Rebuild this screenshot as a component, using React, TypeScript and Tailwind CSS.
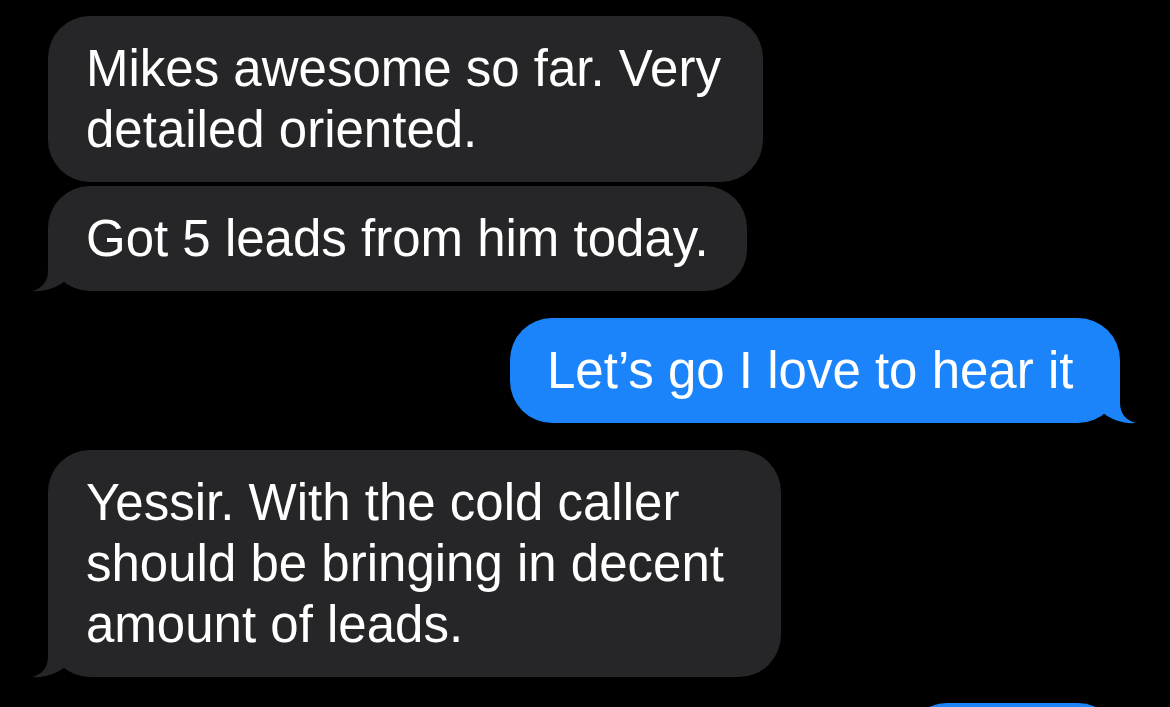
// Messages thread (dark mode)

type Msg = { text: string; me: boolean; width: string; tail: boolean };

const messages: Msg[] = [
  { text: "Mikes awesome so far. Very detailed oriented.", me: false, width: "w-[715px]", tail: false },
  { text: "Got 5 leads from him today.", me: false, width: "w-[699px]", tail: true },
  { text: "Let\u2019s go I love to hear it", me: true, width: "w-[610px]", tail: true },
  {
    text: "Yessir. With the cold caller should be bringing in decent amount of leads.",
    me: false,
    width: "w-[733px]",
    tail: true,
  },
];

// bubble tail drawn at the bottom corner
const Tail = ({ me }: { me: boolean }) => (
  <svg
    width="40"
    height="42"
    viewBox="-17 -42 40 42"
    className={
      me
        ? "absolute bottom-0 right-[-17px] -scale-x-100 overflow-visible"
        : "absolute bottom-0 left-[-17px] overflow-visible"
    }
  >
    <path
      d="M 0 -42 L 0 -20 C 0 -9 -7 -2 -16 0 C -4 1 8 -3 17 -10 L 22 -22 L 22 -42 Z"
      fill={me ? "#1b84fa" : "#262628"}
    />
  </svg>
);

const Bubble = ({ msg }: { msg: Msg }) => (
  <div className={msg.me ? "flex justify-end pr-[50px]" : "flex justify-start pl-[48px]"}>
    <div
      className={`relative ${msg.width} rounded-[42px] py-[22px] ${
        msg.me ? "bg-[#1b84fa] pl-[37px] pr-[20px]" : "bg-[#262628] pl-[38px] pr-[20px]"
      }`}
    >
      <p className="text-[51px] leading-[61px] text-white">{msg.text}</p>
      {msg.tail && <Tail me={msg.me} />}
    </div>
  </div>
);

export default function App() {
  return (
    <div
      className="h-[707px] w-[1170px] overflow-hidden bg-black pt-[16px]"
      style={{ fontFamily: '"Liberation Sans", Arial, sans-serif' }}
    >
      <div className="flex flex-col">
        <Bubble msg={messages[0]} />
        <div className="mt-[4px]">
          <Bubble msg={messages[1]} />
        </div>
        <div className="mt-[27px]">
          <Bubble msg={messages[2]} />
        </div>
        <div className="mt-[27px]">
          <Bubble msg={messages[3]} />
        </div>

        {/* next outgoing bubble, mostly cut off */}
        <div className="mt-[26px] flex justify-end pr-[50px]">
          <div className="h-[104px] w-[215px] rounded-[42px] bg-[#1b84fa]" />
        </div>
      </div>
    </div>
  );
}
